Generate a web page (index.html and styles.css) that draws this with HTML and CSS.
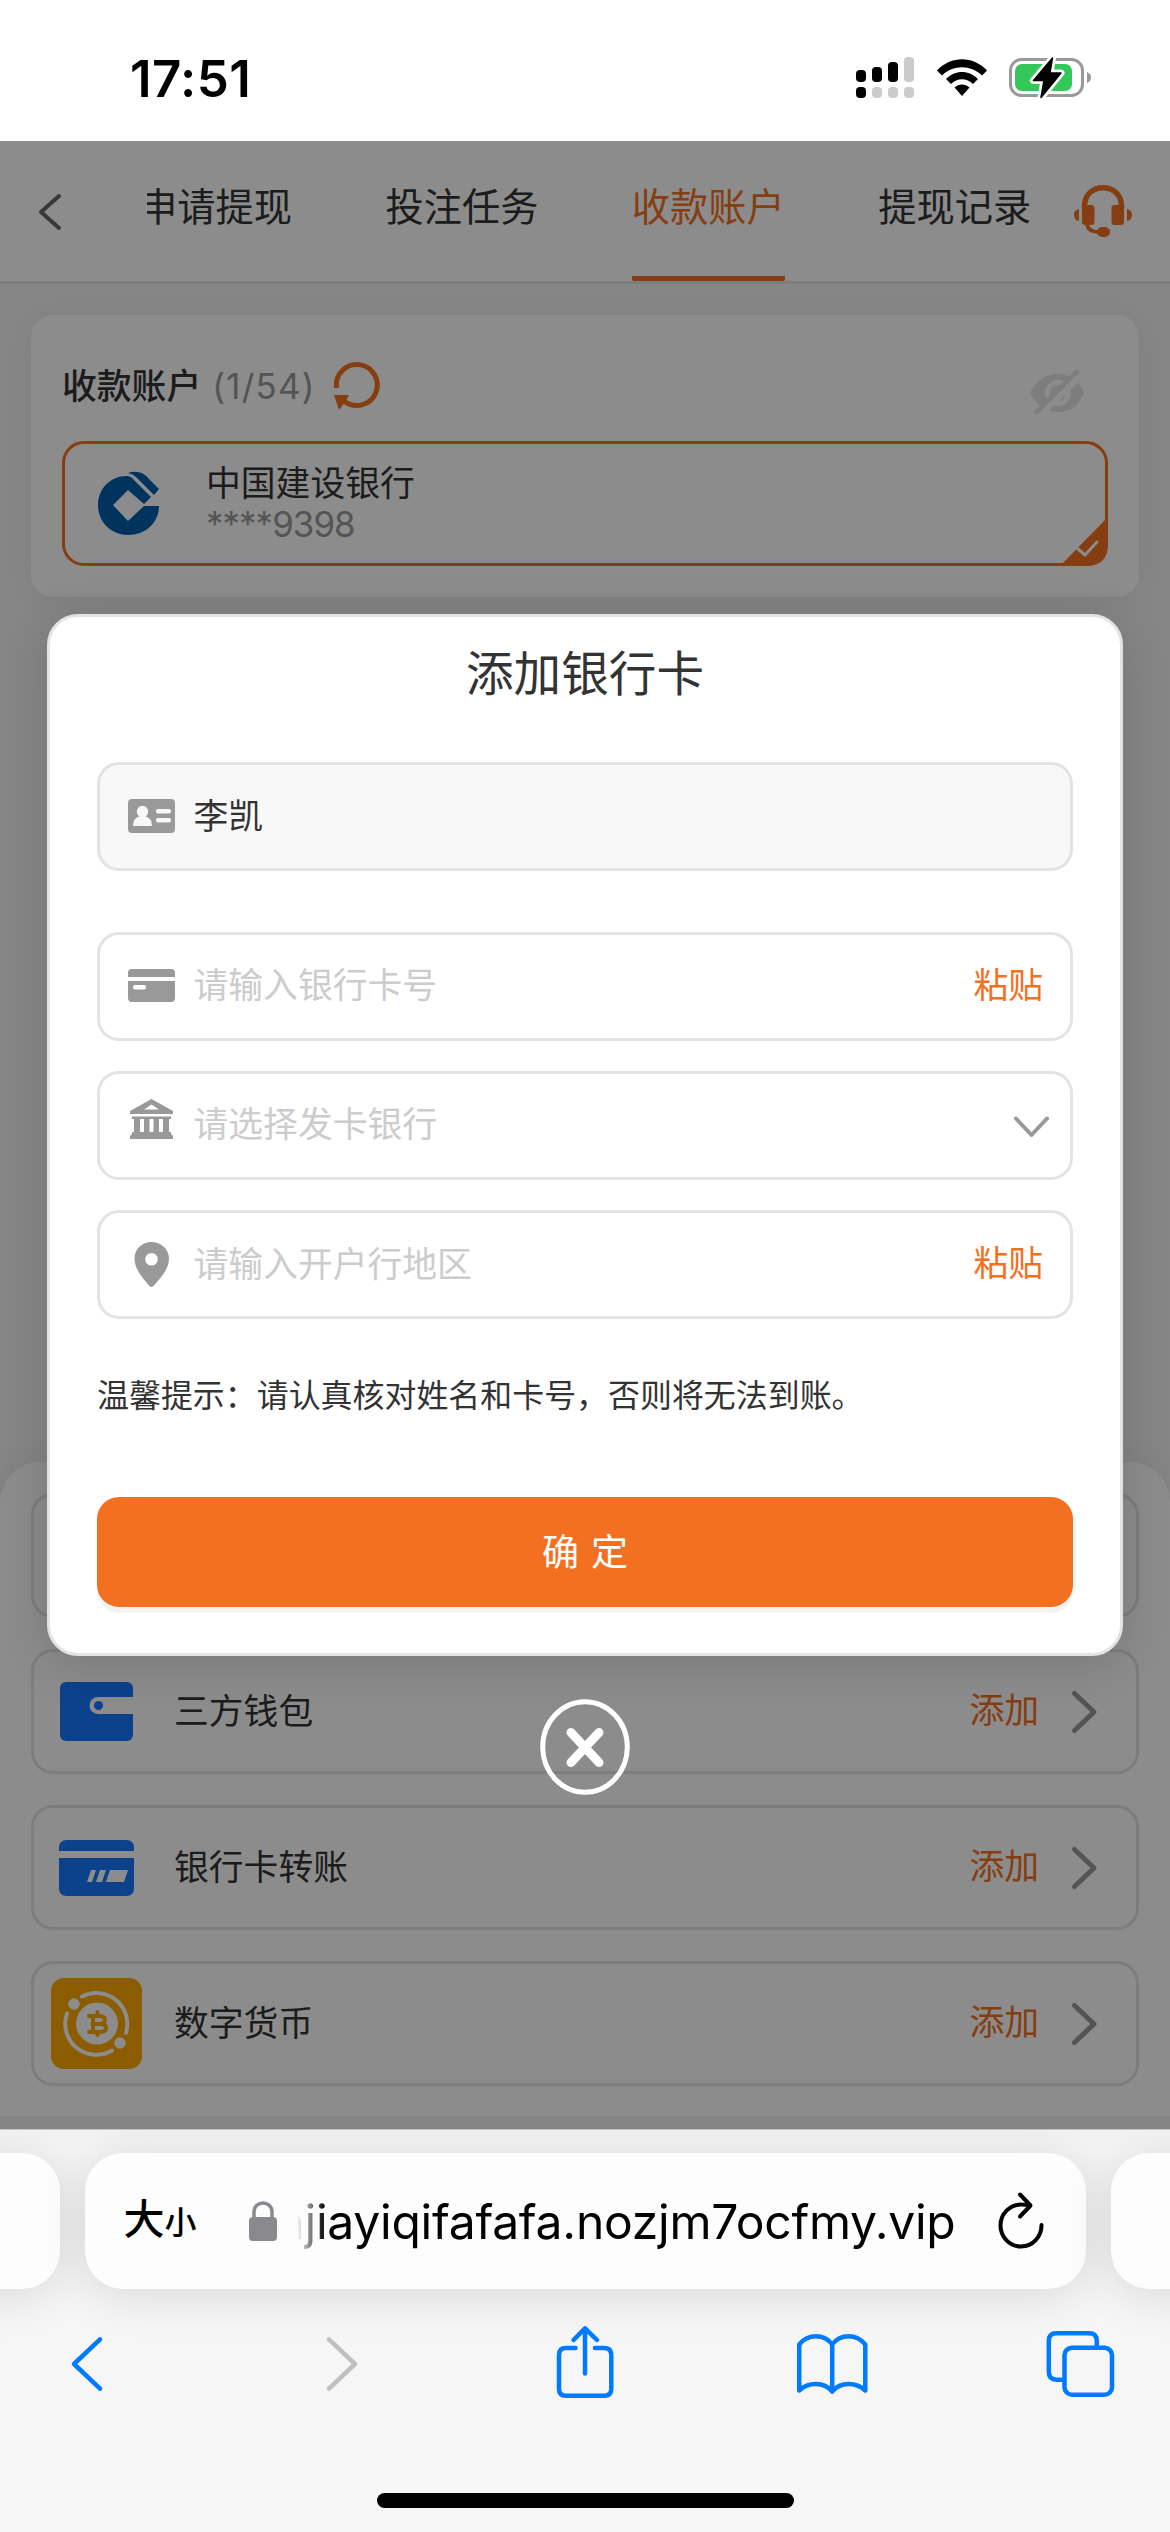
FILE: index.html
```html
<!DOCTYPE html>
<html lang="zh-CN">
<head>
<meta charset="utf-8">
<title>收款账户</title>
<link rel="stylesheet" href="styles.css">
</head>
<body>
<header class="status">
  <span class="clock">17:51</span>
  <div class="status-icons">
    <svg class="signal" width="58" height="42" viewBox="0 0 58 42"><g fill="#000"><rect x="0" y="13" width="10" height="12" rx="4"/><rect x="16" y="10" width="10" height="15" rx="4"/><rect x="32" y="5" width="10" height="20" rx="4"/><rect x="0" y="30" width="10" height="11" rx="4"/></g><g fill="#cbcbcb"><rect x="48" y="0" width="10" height="25" rx="4"/><rect x="16" y="30" width="10" height="11" rx="4"/><rect x="32" y="30" width="10" height="11" rx="4"/><rect x="48" y="30" width="10" height="11" rx="4"/></g></svg>
    <svg class="wifi" width="50" height="37" viewBox="0 0 50 37"><path d="M0 11.500C14-3.500 36-3.500 50 11.500L45 16.500C34 5.500 16 5.500 5 16.500ZM9 20C18 10.500 32 10.500 41 20L36 25C30 18.500 20 18.500 14 25ZM17.500 28.500C22 24.500 28 24.500 32.500 28.500L25 37Z"/></svg>
    <svg class="battery" width="83" height="42" viewBox="0 0 83 42"><rect x="1.500" y="2.500" width="72" height="36" rx="11" fill="none" stroke="#999" stroke-width="3"/><path d="M78 15Q82 16.500 82 20.500T78 26Z" fill="#999"/><rect x="6" y="7" width="57" height="27" rx="7" fill="#34c759"/><path d="M43.500 1L24.500 23.500H35L32 40.500L52 16H41Z" fill="#000" stroke="#fff" stroke-width="7" stroke-linejoin="round" paint-order="stroke"/><path d="M43.500 1L24.500 23.500H35L32 40.500L52 16H41Z" stroke="#000" stroke-width="1.500" stroke-linejoin="round"/></svg>
  </div>
</header>

<main class="page">
  <nav class="nav">
    <svg class="nav-back" width="23" height="36" viewBox="0 0 23 36"><path d="M21 2L3 18L21 34" fill="none" stroke="#666" stroke-width="4" stroke-linecap="round" stroke-linejoin="round"/></svg>
    <div class="tabs">
      <span class="tab">申请提现</span><span class="tab">投注任务</span><span class="tab tab-on">收款账户</span><span class="tab">提现记录</span>
    </div>
    <svg class="service" width="58" height="52" viewBox="0 0 58 52"><g fill="none" stroke="#f37021"><path d="M10.500 23V21C10.500-3.500 47.500-3.500 47.500 21V23" stroke-width="5.500"/><path d="M13 38C13 44.500 17 47 25 47" stroke-width="3.500"/></g><g fill="#f37021"><rect x="8" y="20" width="12.500" height="20" rx="3"/><rect x="37.500" y="20" width="12.500" height="20" rx="3"/><path d="M5 24V36Q0 35 0 30T5 24ZM53 24V36Q58 35 58 30T53 24Z"/><rect x="23" y="42" width="13" height="10" rx="5"/></g></svg>
  </nav>

  <section class="card">
    <div class="card-head">
      <h1 class="card-title">收款账户</h1>
      <span class="count">(1/54)</span>
      <svg class="refresh" width="46" height="47" viewBox="0 0 46 47"><path d="M2.500 25A20.500 20.500 0 1 1 10 38" fill="none" stroke="#f37021" stroke-width="5"/><path d="M0 32L15 32L11 39L5 47Z" fill="#f37021"/></svg>
      <svg class="eye" width="54" height="46" viewBox="0 0 54 46"><path d="M0 24Q10 5 28 5T54 24Q46 43 28 43T0 24Z" fill="#e3e3e3"/><circle cx="28" cy="24" r="10.500" fill="none" stroke="#fff" stroke-width="5"/><path d="M8 45.500L52 4" stroke="#fff" stroke-width="9"/><path d="M5 44.500L48 1.500" stroke="#e3e3e3" stroke-width="4.500"/></svg>
    </div>
    <div class="account">
      <svg class="ccb" width="62" height="63" viewBox="0 0 62 63"><path fill="#0060ae" d="M29 4C12 4 0 17 0 33C0 50 13 63 30 63C48 63 61 50 61 34H46L30 49L15 33L30 18L46 32L53 25L34 6Q32 4 29 4Z"/><path fill="#0060ae" d="M30 1Q43-3 51 7L61 17L56 23L38 5Q35 2 30 1Z"/></svg>
      <div class="account-text"><span>中国建设银行</span><span class="account-no">****9398</span></div>
      <svg class="corner" width="48" height="49" viewBox="0 0 48 49"><path d="M48 0V27Q48 49 26 49H0Z" fill="#f37021"/><path d="M18 32L25 38L37 25" fill="none" stroke="#fff" stroke-width="3" stroke-linecap="round" stroke-linejoin="round"/></svg>
    </div>
  </section>

  <section class="methods">
    <div class="method"></div>
    <div class="method">
      <svg class="m-icon" width="91" height="91" viewBox="0 0 91 91"><rect x="9" y="16" width="73" height="59" rx="6" fill="#1677ff"/><path d="M82 31H47A8.500 8.500 0 0 0 47 48H82Z" fill="#fff"/><circle cx="47.500" cy="39.500" r="4.500" fill="#1677ff"/></svg>
      <span class="m-name">三方钱包</span><span class="m-add">添加</span>
      <svg class="m-arrow" width="25" height="42" viewBox="0 0 25 42"><path d="M2.500 2.500L22 21L2.500 39.500"/></svg>
    </div>
    <div class="method">
      <svg class="m-icon" width="91" height="91" viewBox="0 0 91 91"><path d="M8 29V26Q8 18 16 18H75Q83 18 83 26V29ZM8 36H83V66Q83 74 75 74H16Q8 74 8 66Z" fill="#1677ff"/><path d="M40 48H45L41 60H36ZM49 48H55L51 60H45ZM59 48H77L73 60H55Z" fill="#fff"/></svg>
      <span class="m-name">银行卡转账</span><span class="m-add">添加</span>
      <svg class="m-arrow" width="25" height="42" viewBox="0 0 25 42"><path d="M2.500 2.500L22 21L2.500 39.500"/></svg>
    </div>
    <div class="method">
      <svg class="m-icon" width="91" height="91" viewBox="0 0 91 91"><rect width="91" height="91" rx="13" fill="#ffa800"/><g fill="none" stroke="#fff" stroke-width="4" stroke-linecap="round"><path d="M31 18.500A31 31 0 0 1 75 55M16 35.500A31 31 0 0 0 61 72.500"/></g><g fill="#fff"><circle cx="23" cy="26" r="5.700"/><circle cx="69" cy="65" r="5.700"/><circle cx="46" cy="45.500" r="21"/></g><path d="M38 38H48Q54 38 54 42T48 46H42M49 46Q55 46 55 50T49 54H38M42 38V54M46.500 34V37M46.500 55V57" fill="none" stroke="#ffa800" stroke-width="4" stroke-linecap="round"/></svg>
      <span class="m-name">数字货币</span><span class="m-add">添加</span>
      <svg class="m-arrow" width="25" height="42" viewBox="0 0 25 42"><path d="M2.500 2.500L22 21L2.500 39.500"/></svg>
    </div>
  </section>
  <div class="page-end"></div>

  <div class="overlay">
    <section class="modal">
      <h2 class="modal-title">添加银行卡</h2>
      <div class="field field-name">
        <svg class="f-icon" width="47" height="46" viewBox="0 0 47 46"><rect y="6" width="47" height="34" rx="4" fill="#999"/><g fill="#f8f8f8"><circle cx="14.500" cy="18.500" r="5.700"/><path d="M5 33Q5 25 12 23H17Q24 25 24 33Z"/><rect x="28" y="16" width="15" height="4.500" rx="2"/><rect x="28" y="25" width="15" height="4.500" rx="2"/></g></svg>
        <span class="f-value">李凯</span>
      </div>
      <div class="field">
        <svg class="f-icon" width="47" height="46" viewBox="0 0 47 46"><path d="M0 14V10Q0 6 4 6H43Q47 6 47 10V14ZM0 18H47V35Q47 39 43 39H4Q0 39 0 35Z" fill="#999"/><rect x="5" y="22" width="13" height="4.500" rx="2" fill="#fff"/></svg>
        <span class="f-hint">请输入银行卡号</span><span class="paste">粘贴</span>
      </div>
      <div class="field">
        <svg class="f-icon" width="47" height="46" viewBox="0 0 47 46"><path fill="#999" fill-rule="evenodd" d="M23.500-3L45 9V12H2V9ZM23.500 2.500L16 7.500H31ZM4 14.500H43V17H41V30H43V32L45 34V37H2V34L4 32V30H6V17H4ZM12 17V30H16V17ZM21.500 17V30H25.500V17ZM31 17V30H35V17Z"/></svg>
        <span class="f-hint">请选择发卡银行</span>
        <svg class="f-down" width="35" height="22" viewBox="0 0 35 22"><path d="M2 2.500L17.500 19L33 2.500" fill="none" stroke="#999" stroke-width="4" stroke-linecap="round" stroke-linejoin="round"/></svg>
      </div>
      <div class="field">
        <svg class="f-icon" width="47" height="46" viewBox="0 0 47 46"><path fill="#999" fill-rule="evenodd" d="M23.500 1C14 1 6.500 8 6.500 17.500C6.500 28.500 15 37.500 21.500 45Q23.500 47 25.500 45C32 37.500 41 28.500 41 17.500C41 8 33 1 23.500 1ZM23.500 12A6.300 6.300 0 1 0 23.500 24.600A6.300 6.300 0 1 0 23.500 12Z"/></svg>
        <span class="f-hint f-hint-low">请输入开户行地区</span><span class="paste">粘贴</span>
      </div>
      <p class="tip">温馨提示：请认真核对姓名和卡号，否则将无法到账。</p>
      <div class="submit"><span>确</span><span>定</span></div>
    </section>
    <svg class="close" width="90" height="96" viewBox="0 0 90 96"><ellipse cx="45" cy="48" rx="42.300" ry="45.300" fill="none" stroke="#fff" stroke-width="5"/><path d="M31 33.500L59 63.500M59 33.500L31 63.500" stroke="#fff" stroke-width="9" stroke-linecap="round"/></svg>
  </div>
</main>

<footer class="browser">
  <div class="url-row">
    <div class="peek peek-left"></div>
    <div class="url">
      <span class="aa">大<small>小</small></span>
      <svg class="lock" width="28" height="40" viewBox="0 0 28 40"><rect y="16" width="28" height="24" rx="4" fill="#89898e"/><path d="M5 18V11C5-1 23-1 23 11V18" fill="none" stroke="#89898e" stroke-width="3.500"/></svg>
      <span class="address">ajiayiqifafafa.nozjm7ocfmy.vip</span>
      <svg class="reload" width="46" height="56" viewBox="0 0 46 56"><g fill="none" stroke="#000" stroke-width="4" stroke-linecap="round" stroke-linejoin="round"><path d="M32 13.500Q28 12.500 23.500 12.500A20.500 21 0 1 0 43.500 33"/><path d="M22 2.500L32.500 13.500L22 24.500"/></g></svg>
    </div>
    <div class="peek peek-right"></div>
  </div>
  <div class="tools">
    <svg width="70" height="76" viewBox="0 0 70 76"><path d="M46 15.300L20 40L46 64.700"/></svg>
    <svg class="off" width="70" height="76" viewBox="0 0 70 76"><path d="M27 15.300L53 40L27 64.700"/></svg>
    <svg width="70" height="76" viewBox="0 0 70 76"><path d="M25.500 24H16Q9 24 9 31V65Q9 71.700 16 71.700H54Q61.300 71.700 61.300 65V31Q61.300 24 54 24H45"/><path d="M35 49.500V5M23.500 16L35 4.300L47 16"/></svg>
    <svg width="70" height="76" viewBox="0 0 70 76"><path d="M34.200 20.500Q28 12.300 18 12.300T1.200 20.500V66.500Q8 60 18 60T34.200 67.500Q40.500 60 50.500 60T67.300 66.500V20.500Q60.500 12.300 50.500 12.300T34.200 20.500V67"/></svg>
    <svg width="70" height="76" viewBox="0 0 70 76"><path d="M15.500 55.700H9.500Q1.800 55.700 1.800 48V17Q1.800 9.300 9.500 9.300H42Q49.800 9.300 49.800 17V21.500"/><rect x="17.500" y="23.700" width="47.500" height="47" rx="7.500"/></svg>
  </div>
  <div class="home"></div>
</footer>
</body>
</html>
```
FILE: styles.css
```css
* { box-sizing: border-box; }
body {
  margin: 0;
  width: 1170px;
  height: 2532px;
  overflow: hidden;
  display: flex;
  flex-direction: column;
  background: #fff;
  color: #333;
  font-family: Inter, "Noto Sans CJK SC", sans-serif;
  font-size: 34.8px;
  line-height: 35px;
}
svg { display: block; flex: none; overflow: visible; }
h1, h2, p { margin: 0; font-weight: 400; }
span { white-space: nowrap; }

.status {
  height: 141px;
  display: flex;
  align-items: flex-start;
  justify-content: space-between;
  padding: 53px 78px 0 130px;
  color: #000;
}
.clock { font-size: 51px; line-height: 51px; font-weight: 600; letter-spacing: 0.4px; }
.status-icons { display: flex; align-items: flex-start; padding-top: 4px; }
.wifi { margin: 2px 22px 0 23px; }

.page {
  position: relative;
  height: 1988px;
  display: flex;
  flex-direction: column;
  background: #f5f5f5;
}
.nav {
  height: 143px;
  display: flex;
  align-items: flex-start;
  background: #fff;
  border-bottom: 3px solid #e3e3e3;
}
.nav-back { margin: 53px 0 0 38px; }
.tabs {
  width: 896px;
  margin-left: 86px;
  height: 140px;
  overflow: hidden;
  display: flex;
  gap: 93.4px;
}
.tab {
  flex: none;
  width: 153px;
  height: 140px;
  line-height: 133px;
  font-size: 38.25px;
}
.tab:first-child { margin-left: -8px; }
.tab-on { color: #f37021; border-bottom: 5px solid #f37021; border-radius: 2px; }
.service { margin: 44px 0 0 31px; }

.card {
  height: 282px;
  margin: 31px 31px 0;
  padding: 0 31px;
  background: #fff;
  border-radius: 22px;
  box-shadow: 0 4px 40px rgba(0, 0, 0, .07);
}
.card-head { display: flex; align-items: center; height: 126px; padding-top: 16px; }
.card-title { font-size: 34.8px; font-weight: 500; }
.count { margin-left: 11px; color: #999; letter-spacing: 1.3px; }
.refresh { margin-left: 18px; }
.eye { margin: 11px 24px 0 auto; }
.account {
  position: relative;
  display: flex;
  align-items: center;
  height: 125px;
  padding-left: 33px;
  border: 3px solid #f37021;
  border-radius: 22px;
}
.account-text { display: flex; flex-direction: column; gap: 6px; margin-left: 46px; }
.account-no { color: #999; letter-spacing: -0.9px; }
.corner { position: absolute; right: -3px; bottom: -3px; }

.methods {
  height: 654px;
  margin-top: auto;
  padding: 31px 31px 0;
  display: flex;
  flex-direction: column;
  gap: 31px;
  background: #fff;
  border-radius: 40px 40px 0 0;
  box-shadow: 0 0 40px rgba(0, 0, 0, .07);
}
.method {
  flex: none;
  display: flex;
  align-items: center;
  height: 125px;
  padding: 0 39px 0 17px;
  border: 3px solid #e3e3e3;
  border-radius: 22px;
}
.m-name { margin-left: 32px; }
.m-add { margin: -3px 33px 0 auto; color: #f37021; }
.m-arrow path { fill: none; stroke: #999; stroke-width: 5; stroke-linecap: round; stroke-linejoin: round; }
.page-end { flex: none; height: 13px; background: #f2f2f2; }

.overlay {
  position: absolute;
  inset: 0;
  display: flex;
  flex-direction: column;
  align-items: center;
  padding-top: 473px;
  background: rgba(0, 0, 0, .45);
}
.modal {
  width: 1076px;
  height: 1042px;
  padding: 0 47px;
  background: #fff;
  border: 3px solid #e3e3e3;
  border-radius: 31px;
  box-shadow: 0 8px 50px rgba(0, 0, 0, .14);
}
.modal-title {
  height: 145px;
  padding-top: 33px;
  font-size: 47.6px;
  line-height: 48px;
  text-align: center;
}
.field {
  display: flex;
  align-items: center;
  height: 109px;
  margin-bottom: 30px;
  padding: 0 27px 2px 28px;
  border: 3px solid #e3e3e3;
  border-radius: 22px;
}
.field-name { margin-bottom: 61px; background: #f8f8f8; }
.f-icon { margin-right: 18.5px; }
.f-value { padding-top: 1px; }
.f-hint { color: #ccc; }
.f-hint-low { padding-top: 2px; }
.paste { margin-left: auto; color: #f37021; }
.f-down { margin: 4px -6px 0 auto; }
.tip { margin-top: 61px; font-size: 31.95px; line-height: 32px; white-space: nowrap; }
.submit {
  display: flex;
  align-items: center;
  justify-content: center;
  gap: 12px;
  height: 110px;
  margin-top: 85px;
  font-size: 37px;
  color: #fff;
  background: #f37021;
  border-radius: 22px;
  box-shadow: 0 6px 0 #f3f3f3;
}
.close { margin-top: 43px; }

.browser {
  height: 403px;
  display: flex;
  flex-direction: column;
  align-items: center;
  background: #f6f6f6;
  border-top: 1px solid #c8c8c8;
  overflow: hidden;
}
.url-row { display: flex; justify-content: center; gap: 25px; padding-top: 23px; }
.peek, .url { height: 136px; background: #fdfdfd; border-radius: 38px; box-shadow: 0 4px 50px rgba(0, 0, 0, .13); }
.peek { flex: none; width: 200px; }
.url {
  flex: none;
  width: 1001px;
  display: flex;
  align-items: center;
  padding: 0 42px 0 39px;
  color: #000;
}
.aa { font-size: 41px; line-height: 41px; font-weight: 500; width: 125px; }
.aa small { font-size: 32px; }
.address {
  flex: none;
  width: 659px;
  margin-left: 20px;
  font-size: 48px;
  line-height: 70px;
  padding-top: 2px;
  letter-spacing: -0.25px;
  direction: rtl;
  overflow: hidden;
  -webkit-mask-image: linear-gradient(90deg, transparent, #000 28px);
  mask-image: linear-gradient(90deg, transparent, #000 28px);
}
.reload { margin: -3px 0 0 auto; }
.tools {
  width: 1063px;
  display: flex;
  justify-content: space-between;
  margin-top: 35px;
}
.tools path, .tools rect { fill: none; stroke: #007aff; stroke-width: 4.5; stroke-linecap: round; stroke-linejoin: round; }
.tools .off path { stroke: #bfbfbf; }
.home { width: 417px; height: 15px; margin-top: 93px; border-radius: 8px; background: #000; }
```
